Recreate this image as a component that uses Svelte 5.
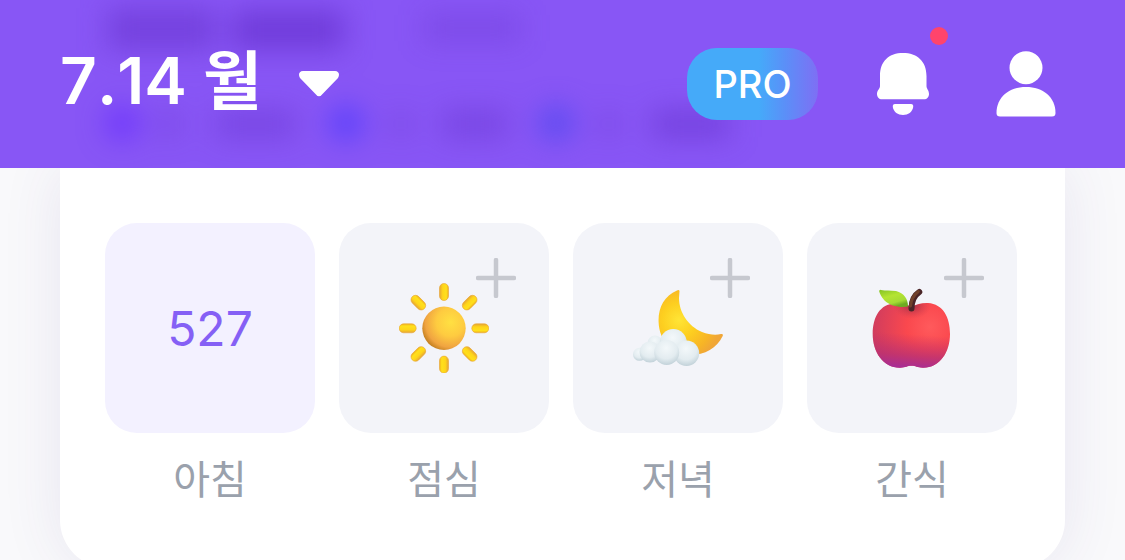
<script>
    let meals = [
        { name: '아침', kcal: 527 },
        { name: '점심', icon: 'sun' },
        { name: '저녁', icon: 'moon' },
        { name: '간식', icon: 'apple' },
    ]

    const rays = [0, 45, 90, 135, 180, 225, 270, 315]
</script>

<div class="screen">
    <header>
        <svg class="glow" width="1125" height="168" viewBox="0 0 1125 168" aria-hidden="true">
            <defs>
                <filter id="soft" x="-50%" y="-100%" width="200%" height="300%" color-interpolation-filters="sRGB">
                    <feGaussianBlur stdDeviation="14" />
                </filter>
            </defs>
            <g filter="url(#soft)" fill="#5d27c4">
                <rect x="108" y="8" width="108" height="42" opacity=".45" />
                <rect x="232" y="10" width="112" height="40" opacity=".55" />
                <rect x="424" y="14" width="96" height="28" opacity=".25" />
                <rect x="156" y="112" width="26" height="24" opacity=".25" />
                <rect x="216" y="110" width="80" height="28" opacity=".35" />
                <rect x="390" y="112" width="22" height="24" opacity=".25" />
                <rect x="442" y="110" width="66" height="28" opacity=".35" />
                <rect x="598" y="112" width="22" height="24" opacity=".25" />
                <rect x="652" y="110" width="78" height="28" opacity=".45" />
                <circle cx="122" cy="123" r="17" fill="#6228ff" opacity=".7" />
                <circle cx="346" cy="123" r="17" fill="#4534ff" opacity=".7" />
                <circle cx="556" cy="123" r="17" fill="#4545ee" opacity=".7" />
            </g>
        </svg>

        <button class="date">
            <span>7.14 월</span>
            <svg width="42" height="28" viewBox="0 0 42 28" aria-hidden="true">
                <path
                    d="M5 1H37C41 1 42 5 40 8L25 23.500Q21 29 17 23.500L2 8C0 5 1 1 5 1Z"
                    fill="#fff"
                />
            </svg>
        </button>

        <nav>
            <button class="pro">PRO</button>
            <button class="icon" aria-label="알림">
                <svg width="72" height="72" viewBox="0 0 72 72" fill="#fff" aria-hidden="true">
                    <path
                        d="M12 28C12 13 21 5 35 5S58.500 13 58.500 28V38C58.500 41 61 42 61 46C61 49 59 51.300 56 51.300H14C11 51.300 9 49 9 46C9 42 12 41 12 38Z"
                    />
                    <path d="M27 56H43Q45.500 56 45.200 59C44.500 64 40 67 35 67S25.500 64 24.800 59Q24.500 56 27 56Z" />
                </svg>
                <span class="dot"></span>
            </button>
            <button class="icon" aria-label="내 정보">
                <svg width="72" height="72" viewBox="0 0 72 72" fill="#fff" aria-hidden="true">
                    <circle cx="36" cy="19.700" r="16.500" />
                    <path d="M6.500 65C6.500 49 19 39 36 39S65.500 49 65.500 65Q65.500 68.500 62 68.500H10Q6.500 68.500 6.500 65Z" />
                </svg>
            </button>
        </nav>
    </header>

    <main>
        <section class="card">
            {#each meals as meal}
                <div class="meal">
                    <button class="tile" class:filled={meal.kcal} aria-label={meal.name}>
                        {#if meal.kcal}
                            {meal.kcal}
                        {:else}
                            <svg class="plus" width="40" height="40" viewBox="0 0 40 40" aria-hidden="true">
                                <path d="M20 2V38M2 20H38" stroke="#c6c8cf" stroke-width="4.500" stroke-linecap="round" />
                            </svg>
                        {/if}

                        {#if meal.icon === 'sun'}
                            <svg width="90" height="90" viewBox="0 0 90 90" aria-hidden="true">
                                <defs>
                                    <radialGradient id="sunBody" cx=".65" cy=".36" r=".72">
                                        <stop offset="0" stop-color="#ffe042" />
                                        <stop offset=".45" stop-color="#fecb40" />
                                        <stop offset=".8" stop-color="#f0a441" />
                                        <stop offset="1" stop-color="#bd7a1c" />
                                    </radialGradient>
                                    <linearGradient id="sunRay">
                                        <stop offset="0" stop-color="#e5a535" />
                                        <stop offset=".35" stop-color="#ffd51a" />
                                        <stop offset=".75" stop-color="#ffe01c" />
                                        <stop offset="1" stop-color="#f0b01c" />
                                    </linearGradient>
                                </defs>
                                {#each rays as angle}
                                    <rect
                                        x="40.500"
                                        y=".5"
                                        width="9"
                                        height="17"
                                        rx="4.500"
                                        fill="url(#sunRay)"
                                        stroke="#e7a432"
                                        stroke-width=".6"
                                        transform="rotate({angle} 45 45.300)"
                                    />
                                {/each}
                                <circle cx="45" cy="45.300" r="21.700" fill="url(#sunBody)" />
                            </svg>
                        {:else if meal.icon === 'moon'}
                            <svg width="90" height="90" viewBox="0 0 90 90" aria-hidden="true">
                                <defs>
                                    <radialGradient id="moonBody" gradientUnits="userSpaceOnUse" cx="46" cy="37" r="42">
                                        <stop offset="0" stop-color="#ffe536" />
                                        <stop offset=".4" stop-color="#fdcf20" />
                                        <stop offset=".8" stop-color="#f7b426" />
                                        <stop offset="1" stop-color="#f0a637" />
                                    </radialGradient>
                                    <radialGradient id="puff" cx=".48" cy=".32" r=".72">
                                        <stop offset="0" stop-color="#f3f8fa" />
                                        <stop offset=".6" stop-color="#e3ecf0" />
                                        <stop offset="1" stop-color="#bccdd5" />
                                    </radialGradient>
                                </defs>
                                <path
                                    d="M46.500 8Q46 6.500 44 7.500C31 13 25 25 25.600 39C26 57 39 72 57 72C72 72 84 65 89.700 53Q90.500 50.500 88 51C82 52.500 76 51.500 69 49C55 43 46 29 46 15Z"
                                    fill="url(#moonBody)"
                                />
                                <g fill="url(#puff)">
                                    <circle cx="6.500" cy="71.300" r="6.500" />
                                    <circle cx="22" cy="60" r="7.500" />
                                    <circle cx="40.300" cy="59.500" r="13.500" />
                                    <circle cx="17" cy="69" r="10.500" />
                                    <circle cx="53.500" cy="70.300" r="12.700" />
                                    <circle cx="33.700" cy="69.500" r="12.500" />
                                </g>
                            </svg>
                        {:else if meal.icon === 'apple'}
                            <svg width="90" height="90" viewBox="0 0 90 90" aria-hidden="true">
                                <defs>
                                    <radialGradient id="appleBody" gradientUnits="userSpaceOnUse" cx="63" cy="44" r="58">
                                        <stop offset="0" stop-color="#ff5a5c" />
                                        <stop offset=".4" stop-color="#fa484e" />
                                        <stop offset="1" stop-color="#d03c5e" />
                                    </radialGradient>
                                    <linearGradient id="appleBase" x1=".55" y1="0" x2=".45" y2="1">
                                        <stop offset=".48" stop-color="#c0306c" stop-opacity="0" />
                                        <stop offset=".8" stop-color="#b72f76" stop-opacity=".7" />
                                        <stop offset="1" stop-color="#a62d98" />
                                    </linearGradient>
                                    <radialGradient id="appleDip">
                                        <stop offset="0" stop-color="#832943" stop-opacity=".75" />
                                        <stop offset="1" stop-color="#c93b50" stop-opacity="0" />
                                    </radialGradient>
                                    <linearGradient id="leaf" x1="0" y1="0" x2=".5" y2="1">
                                        <stop offset="0" stop-color="#84c225" />
                                        <stop offset=".45" stop-color="#b4e432" />
                                        <stop offset=".8" stop-color="#a5da35" />
                                        <stop offset="1" stop-color="#6dab22" />
                                    </linearGradient>
                                    <clipPath id="appleShape">
                                        <path
                                            d="M44.500 24C50 21 55 19.800 61 20C76 21 83 34 83 51C83 69 73 84.700 56 84.700C50 84.700 49 82.800 44.500 82.800S39 84.700 33 84.700C16 84.700 5.700 69 5.700 51C5.700 34 13 21 28 20.500C34 20.300 39 21 44.500 24Z"
                                        />
                                    </clipPath>
                                </defs>
                                <g clip-path="url(#appleShape)">
                                    <rect width="90" height="90" fill="url(#appleBody)" />
                                    <rect y="20" width="90" height="65" fill="url(#appleBase)" />
                                    <ellipse cx="45" cy="23" rx="19" ry="13" fill="url(#appleDip)" />
                                </g>
                                <path
                                    d="M41 23.600C33 25 23 23 17.500 17.500C14.500 14 13 11 12.200 8.500Q12 6.500 14 6.900C19 8 23 7 29 8C37 10 41 16 41 23.600Z"
                                    fill="url(#leaf)"
                                />
                                <path
                                    d="M44.500 25.500C44.500 18 47 12.500 52.300 9"
                                    fill="none"
                                    stroke="#4a2528"
                                    stroke-width="6"
                                    stroke-linecap="round"
                                />
                                <path
                                    d="M43.500 23C44 16 47 12 51.300 8.500"
                                    fill="none"
                                    stroke="#70412b"
                                    stroke-width="3"
                                    stroke-linecap="round"
                                />
                            </svg>
                        {/if}
                    </button>
                    <span class="name">{meal.name}</span>
                </div>
            {/each}
        </section>
    </main>
</div>

<style>
    :global(body) {
        margin: 0;
        background: #f9f9fb;
        font-family: Inter, "Noto Sans CJK KR", sans-serif;
    }

    .screen {
        height: 100vh;
        overflow-x: hidden;
        overflow-y: auto;
        scrollbar-width: none;
    }

    button {
        border: none;
        padding: 0;
        background: none;
        font-family: inherit;
        cursor: pointer;
    }

    header {
        position: sticky;
        top: 0;
        z-index: 1;
        display: flex;
        align-items: center;
        justify-content: space-between;
        box-sizing: border-box;
        height: 168px;
        padding: 0 63px 0 60px;
        background: #8856f5;
        overflow: hidden;
    }
    .glow {
        position: absolute;
        top: 0;
        left: 0;
    }

    .date {
        position: relative;
        display: flex;
        align-items: center;
        gap: 36px;
        color: #fff;
        font-size: 64px;
        font-weight: 600;
        line-height: 72px;
        font-kerning: none;
    }
    .date span {
        padding-bottom: 6px;
    }

    nav {
        position: relative;
        display: flex;
        align-items: center;
        gap: 50px;
    }
    .pro {
        width: 131px;
        height: 72px;
        border-radius: 30px;
        background: linear-gradient(90deg, #45aaf9 55%, #5b8ff8 75%, #7e6ff4);
        color: #fff;
        font-size: 38px;
        font-weight: 500;
    }
    .icon {
        position: relative;
        width: 72px;
        height: 72px;
    }
    .icon svg {
        display: block;
    }
    .dot {
        position: absolute;
        top: -21px;
        right: -8px;
        width: 18px;
        height: 18px;
        border-radius: 50%;
        background: #ff446c;
    }

    main {
        padding: 0 60px 60px;
    }
    .card {
        display: grid;
        grid-template-columns: repeat(4, 1fr);
        gap: 24px;
        padding: 55px 48px 64px 45px;
        border-radius: 0 0 48px 48px;
        background: #fff;
        box-shadow: 0 0 60px rgba(80, 60, 150, 0.1);
    }
    .meal {
        display: flex;
        flex-direction: column;
        gap: 23px;
    }
    .tile {
        position: relative;
        display: flex;
        align-items: center;
        justify-content: center;
        aspect-ratio: 1;
        border-radius: 32px;
        background: #f3f4f9;
    }
    .filled {
        background: #f3f1ff;
        color: #8560f5;
        font-size: 48px;
        font-weight: 400;
    }
    .plus {
        position: absolute;
        top: 35px;
        right: 33px;
    }
    .name {
        color: #9aa1ac;
        font-size: 40px;
        line-height: 48px;
        text-align: center;
    }
</style>
